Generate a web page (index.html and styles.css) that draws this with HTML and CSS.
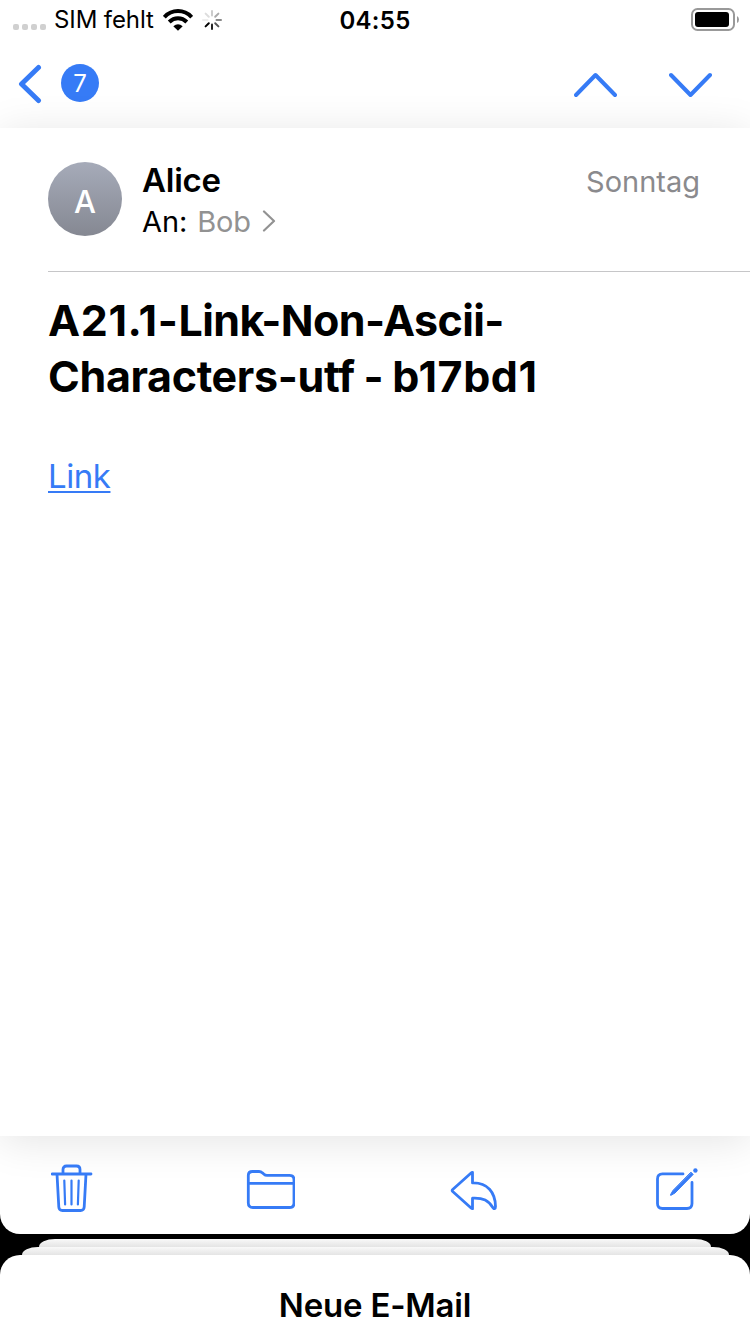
FILE: index.html
```html
<!DOCTYPE html>
<html lang="de">
<head>
<meta charset="utf-8">
<title>Mail</title>
<link rel="stylesheet" href="styles.css">
</head>
<body>
<div class="screen">
  <div class="card">
    <header class="status">
      <div class="carrier">
        <span class="dots"><i></i><i></i><i></i><i></i></span>
        <span class="sim">SIM fehlt</span>
        <svg class="wifi" width="30" height="22" viewBox="0 0 30 22">
          <g fill="none" stroke="#000" stroke-width="4">
            <path d="M1.3 8.2Q7 2.1 15 2.1T28.7 8.2"/>
            <path d="M6.2 13Q10 9.3 15 9.3T23.8 13"/>
          </g>
          <path d="M10.3 17.2Q15 13.5 19.7 17.2L15 21.8Z"/>
        </svg>
        <svg class="spinner" width="20" height="20" viewBox="-10 -10 20 20" stroke-width="2" stroke-linecap="round">
          <path d="M0-4.5V-9" stroke="#ccc"/>
          <path d="M3.2-3.2L6.4-6.4" stroke="#aaa"/>
          <path d="M4.5 0H9" stroke="#888"/>
          <path d="M3.2 3.2L6.4 6.4" stroke="#555"/>
          <path d="M0 4.5V9" stroke="#222"/>
          <path d="M-3.2 3.2L-6.4 6.4" stroke="#000"/>
          <path d="M-4.5 0H-9" stroke="#eee"/>
          <path d="M-3.2-3.2L-6.4-6.4" stroke="#ddd"/>
        </svg>
      </div>
      <span class="clock">04:55</span>
      <svg class="battery" width="49" height="24" viewBox="0 0 49 24">
        <rect x="2" y="1" width="42" height="21" rx="5.5" fill="none" stroke="#999" stroke-width="2"/>
        <rect x="5" y="4" width="34" height="15" rx="3"/>
        <path d="M47 8Q49 9 49 11.500T47 15Z" fill="#999"/>
      </svg>
    </header>
    <nav class="nav">
      <svg class="back" width="24" height="40" viewBox="0 0 24 40"><path d="M20.500 3.500L3.500 20L20.500 36.500"/></svg>
      <span class="count">7</span>
      <svg class="chev up" width="43" height="26" viewBox="0 0 43 26"><path d="M2 23L21.500 3L41 23"/></svg>
      <svg class="chev" width="43" height="26" viewBox="0 0 43 26"><path d="M2 3L21.500 23L41 3"/></svg>
    </nav>
    <main class="message">
      <section class="sender">
        <div class="avatar">A</div>
        <div class="people">
          <div class="from">Alice</div>
          <div class="to"><span>An:</span><span class="bob">Bob</span>
            <svg width="14" height="22" viewBox="0 0 14 22"><path d="M2 1.500L12 11L2 20.500" fill="none" stroke="#929292" stroke-width="2.200" stroke-linecap="round" stroke-linejoin="round"/></svg>
          </div>
        </div>
        <span class="date">Sonntag</span>
      </section>
      <h1 class="subject"><span class="wide">A21.1-</span>Link-Non-Ascii-<br><span class="second">Characters-utf - </span><span class="wide">b17bd1</span></h1>
      <a class="link" href="#">Link</a>
    </main>
    <footer class="tools">
      <svg width="42" height="50" viewBox="0.500 0 42 50">
        <path d="M1.500 11H40.500M12.500 11V6.500Q12.500 3 16 3H26Q29.500 3 29.500 6.500V11M6.500 11L8.300 44Q8.500 47.500 12 47.500H30Q33.500 47.500 33.700 44L35.500 11"/>
        <path d="M13.800 17.500L14.600 41.500M21 17.500V41.500M28.200 17.500L27.400 41.500" stroke-width="2.200"/>
      </svg>
      <svg width="50" height="50" viewBox="-1 0 50 50">
        <path d="M2.300 14V12.500Q2.300 8.500 6.500 8.500H13Q15 8.500 16.500 9.900L18 11.200Q19.200 12.400 21 12.400H43.500Q48 12.400 48 17V40Q48 44.500 43.500 44.500H6.800Q2.300 44.500 2.300 40ZM2.300 20.300H48"/>
      </svg>
      <svg width="50" height="50" viewBox="-1.500 -0.500 50 50">
        <path d="M23 8.800Q22.300 8.900 21.600 9.500L3.200 26Q2.200 27 3.200 28L21.600 44.500Q22.300 45.100 23 45.200V34.700C34 34.200 39 37 43.500 44.300Q44.300 45.600 45.200 45Q46 44.600 46 43C45.800 29 38 19 23 19.400Z"/>
      </svg>
      <svg width="50" height="50" viewBox="0 -0.500 50 50">
        <path d="M33 10.400H12.500Q7.500 10.400 7.500 15.500V40Q7.500 45 12.500 45H37Q42 45 42 40V19"/>
        <path d="M41.200 8.900L43.200 10.900L25 29.500L21 31.800Q20.200 32 20.500 31.200L22.800 27.200Z" fill="#367bf6" stroke-width="1"/>
        <circle cx="45.400" cy="7" r="2.200" fill="#367bf6" stroke="none"/>
      </svg>
    </footer>
  </div>
  <div class="stack">
    <div class="sheet far"></div>
    <div class="sheet near"></div>
    <div class="sheet front">Neue E-Mail</div>
  </div>
</div>
</body>
</html>
```
FILE: styles.css
```css
* { box-sizing: border-box; }
body { margin: 0; background: #000; color: #000; font-family: Inter, "Liberation Sans", sans-serif; }
svg { display: block; flex: none; }
.screen { width: 750px; height: 1334px; overflow: hidden; display: flex; flex-direction: column; background: #000; }
.card { height: 1234px; flex: none; display: flex; flex-direction: column; background: #fff; overflow: hidden; border-radius: 0 0 20px 20px; }
.status { height: 40px; flex: none; display: grid; grid-template-columns: 1fr auto 1fr; line-height: 42px; font-size: 24px; }
.carrier { height: 40px; display: flex; align-items: center; padding-left: 13px; }
.dots { display: flex; gap: 3px; padding-top: 13px; }
.dots i { width: 6px; height: 6px; border-radius: 2px; background: #d0d0d0; }
.sim { margin-left: 8px; width: 101px; white-space: nowrap; letter-spacing: -.1px; }
.wifi { margin-left: 8px; }
.spinner { margin-left: 9px; }
.clock { font-weight: 600; letter-spacing: .3px; }
.battery { justify-self: end; margin: 8px 11px 0 0; }
.nav { height: 88px; flex: none; display: flex; align-items: center; padding: 0 38px 0 18px; }
.nav svg { fill: none; stroke: #367bf6; stroke-linecap: round; stroke-linejoin: round; stroke-width: 4; }
.nav .back { stroke-width: 5; }
.count { width: 38px; height: 38px; margin: -2px auto 0 19px; border-radius: 50%; background: #367bf6; color: #fff; font-size: 24px; line-height: 40px; text-align: center; }
.chev { margin-top: 2px; }
.up { margin-right: 52px; }
.message { height: 1008px; flex: none; background: #fff; box-shadow: 0 5px 40px rgba(0,0,0,.11); padding-left: 48px; }
.sender { height: 144px; border-bottom: 1px solid #c6c6c8; display: flex; padding: 34px 50px 0 0; }
.avatar { width: 74px; height: 74px; border-radius: 50%; background: linear-gradient(#a6abb9, #858892); color: #fff; font-size: 31px; font-weight: 500; line-height: 80px; text-align: center; }
.people { margin-left: 20px; }
.from { font-size: 33px; font-weight: 600; line-height: 36px; letter-spacing: -.25px; }
.to { display: flex; align-items: center; height: 46px; font-size: 29px; letter-spacing: -.1px; }
.bob { color: #929292; margin: 0 11px 0 10px; }
.date { margin-left: auto; color: #8a8a8d; font-size: 29px; line-height: 40px; }
.subject { margin: 20px 0 0; font-size: 43px; line-height: 56px; font-weight: 700; white-space: nowrap; letter-spacing: -.6px; }
.wide { letter-spacing: .6px; }
.second { letter-spacing: -.35px; word-spacing: -1px; }
.link { display: inline-block; margin-top: 51px; font-size: 33px; line-height: 42px; letter-spacing: -.45px; color: #367bf6; text-underline-offset: 3px; text-decoration-thickness: 2px; text-decoration-skip-ink: none; }
.tools { height: 98px; flex: none; display: flex; justify-content: space-between; padding: 27px 50px 0 51px; }
.tools svg { fill: none; stroke: #367bf6; stroke-width: 2.800; stroke-linecap: round; stroke-linejoin: round; }
.stack { height: 95px; margin-top: 5px; display: flex; flex-direction: column; align-items: center; }
.sheet { flex: none; background: linear-gradient(#f9f9f9, #e4e4e4); }
.far { width: 672px; height: 8px; border-radius: 16px 16px 0 0 / 8px 8px 0 0; }
.near { width: 707px; height: 8px; border-radius: 16px 16px 0 0 / 8px 8px 0 0; }
.front { width: 750px; height: 79px; border-radius: 20px 20px 0 0; background: #fff; text-align: center; font-size: 33px; font-weight: 600; line-height: 101px; letter-spacing: -.2px; }
```
